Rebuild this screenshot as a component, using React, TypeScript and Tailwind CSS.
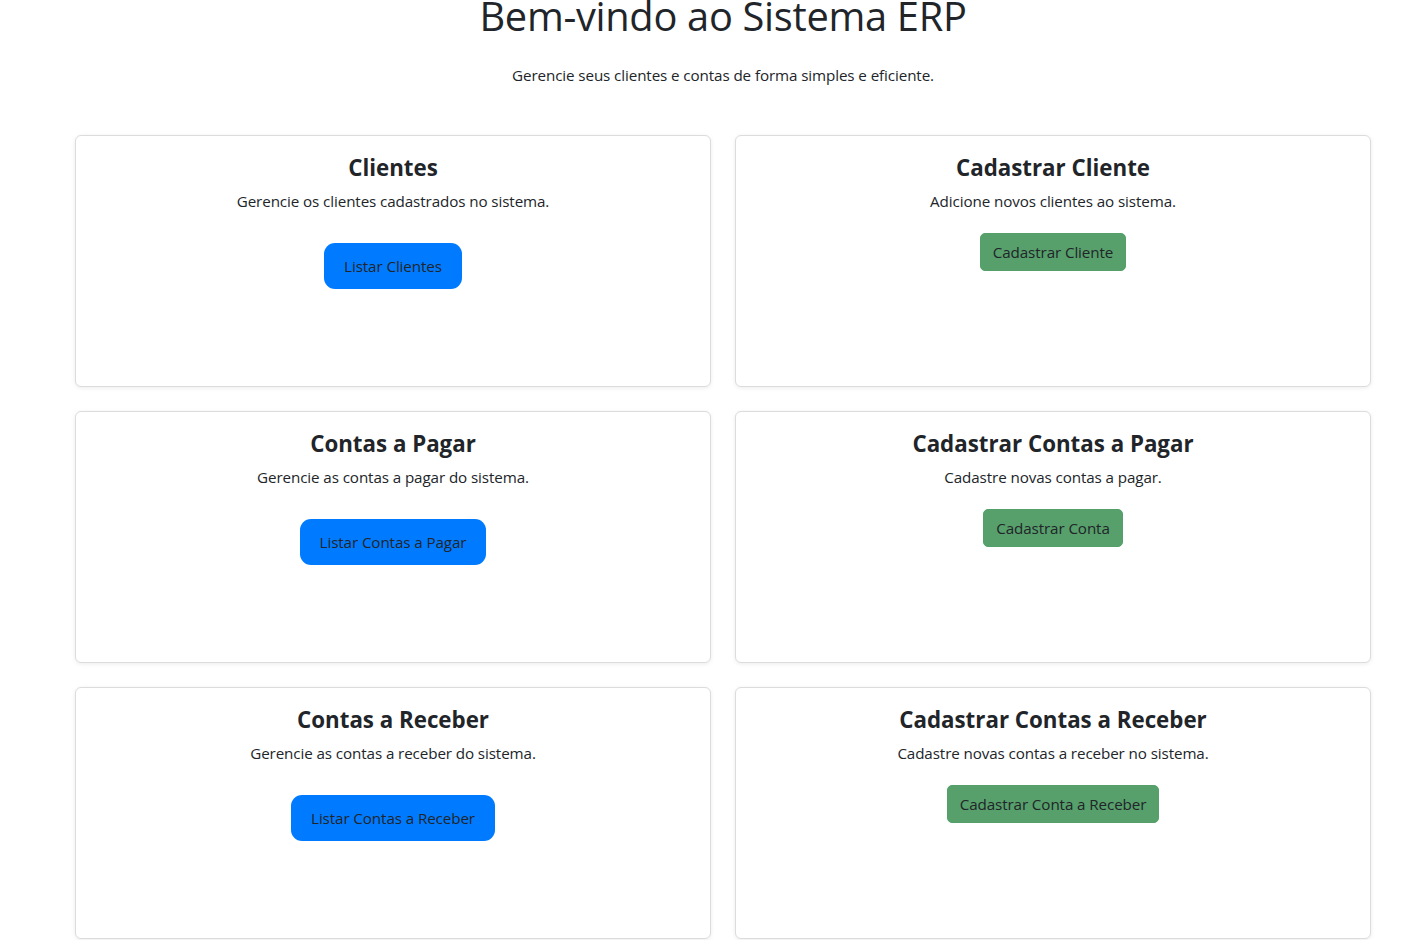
import React from "react";

type Card = { title: string; desc: string; btn: string; kind: "blue" | "green" };

const cards: Card[] = [
  { title: "Clientes", desc: "Gerencie os clientes cadastrados no sistema.", btn: "Listar Clientes", kind: "blue" },
  { title: "Cadastrar Cliente", desc: "Adicione novos clientes ao sistema.", btn: "Cadastrar Cliente", kind: "green" },
  { title: "Contas a Pagar", desc: "Gerencie as contas a pagar do sistema.", btn: "Listar Contas a Pagar", kind: "blue" },
  { title: "Cadastrar Contas a Pagar", desc: "Cadastre novas contas a pagar.", btn: "Cadastrar Conta", kind: "green" },
  { title: "Contas a Receber", desc: "Gerencie as contas a receber do sistema.", btn: "Listar Contas a Receber", kind: "blue" },
  { title: "Cadastrar Contas a Receber", desc: "Cadastre novas contas a receber no sistema.", btn: "Cadastrar Conta a Receber", kind: "green" },
];

export default function App() {
  return (
    <div
      className="min-h-[940px] bg-white text-[#212529]"
      style={{ fontFamily: '"Open Sans", "Noto Sans", sans-serif' }}
    >
      <div className="pl-[75px] pr-[40px]">
        <div className="w-[1296px] flex flex-col items-center">
          <h1 className="mt-[-8px] text-[39.8px] leading-[48px] font-medium tracking-[-0.3px]">
            Bem-vindo ao Sistema ERP
          </h1>
          <p className="mt-[23px] text-[15.2px] leading-[24px] tracking-[-0.1px]">
            Gerencie seus clientes e contas de forma simples e eficiente.
          </p>
        </div>
        <div className="mt-[48px] grid w-[1296px] grid-cols-2 gap-[24px]">
          {cards.map((c) => (
            <div
              key={c.title}
              className="flex h-[252px] flex-col items-center rounded-[6px] border border-[#dcdcdc] bg-white px-4 pt-[17px] shadow-[0_1px_4px_rgba(0,0,0,0.08)]"
            >
              <h3 className="text-[22.3px] leading-[29px] font-bold">{c.title}</h3>
              <p className="mt-[7px] text-[15.2px] leading-[24px] tracking-[-0.1px]">{c.desc}</p>
              {c.kind === "blue" ? (
                <button className="mt-[30px] h-[46px] rounded-[11px] bg-[#007bff] px-[20px] text-[15.2px] leading-[24px] tracking-[-0.1px] text-[#212529]">
                  {c.btn}
                </button>
              ) : (
                <button className="mt-[20px] h-[38px] rounded-[5px] border border-[#53a068] bg-[#57a06b] px-[12px] text-[15.2px] leading-[24px] tracking-[-0.1px] text-[#212529]">
                  {c.btn}
                </button>
              )}
            </div>
          ))}
        </div>
      </div>
    </div>
  );
}
